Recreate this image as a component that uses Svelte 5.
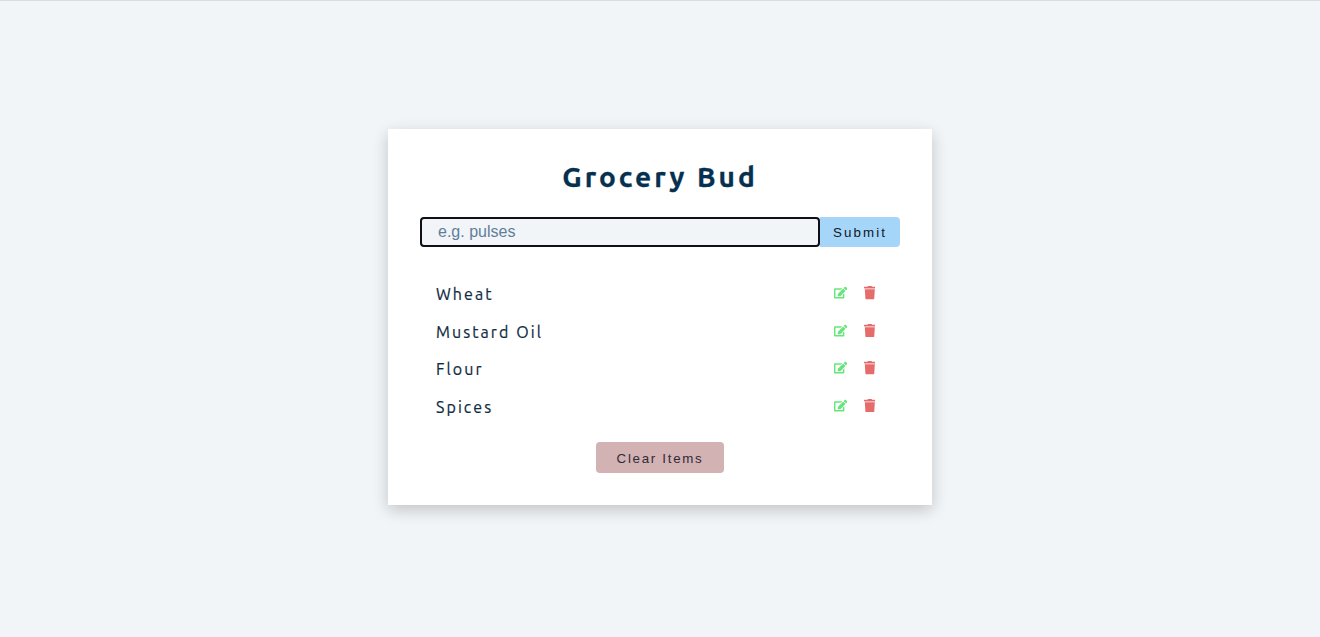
<script>
  const items = ['Wheat', 'Mustard Oil', 'Flour', 'Spices'];
</script>

<main>
  <section class="card">
    <h3>Grocery Bud</h3>
    <form onsubmit={(e) => e.preventDefault()}>
      <input type="text" placeholder="e.g. pulses" />
      <button class="submit" type="submit">Submit</button>
    </form>
    <div class="list">
      {#each items as item}
        <article>
          <p>{item}</p>
          <div class="actions">
            <button class="edit" type="button" aria-label="edit">
              <svg viewBox="0 0 576 512" fill="currentColor"><path d="M402.6 83.2l90.2 90.2c3.8 3.8 3.8 10 0 13.8L274.4 405.6l-92.8 10.3c-12.4 1.4-22.9-9.1-21.5-21.5l10.3-92.8L388.8 83.2c3.8-3.8 10-3.8 13.8 0zm162-22.9l-48.8-48.8c-15.2-15.2-39.9-15.2-55.2 0l-35.4 35.4c-3.8 3.8-3.8 10 0 13.8l90.2 90.2c3.8 3.8 10 3.8 13.8 0l35.4-35.4c15.2-15.3 15.2-40 0-55.2zM384 346.2V448H64V128h229.8c3.2 0 6.2-1.3 8.5-3.5l40-40c7.6-7.6 2.2-20.5-8.5-20.5H48C21.5 64 0 85.5 0 112v352c0 26.5 21.5 48 48 48h352c26.5 0 48-21.5 48-48V306.2c0-10.7-12.9-16-20.5-8.5l-40 40c-2.2 2.3-3.5 5.3-3.5 8.5z" /></svg>
            </button>
            <button class="delete" type="button" aria-label="delete">
              <svg viewBox="0 0 448 512" fill="currentColor"><path d="M432 32H312l-9.4-18.7A24 24 0 0 0 281.1 0H166.8a23.72 23.72 0 0 0-21.4 13.3L136 32H16A16 16 0 0 0 0 48v32a16 16 0 0 0 16 16h416a16 16 0 0 0 16-16V48a16 16 0 0 0-16-16zM53.2 467a48 48 0 0 0 47.9 45h245.8a48 48 0 0 0 47.9-45L416 128H32z" /></svg>
            </button>
          </div>
        </article>
      {/each}
    </div>
    <button class="clear" type="button">Clear Items</button>
  </section>
</main>

<style>
  :global(body) {
    background: #f1f5f8;
  }
  main {
    box-sizing: border-box;
    height: 637px;
    border-top: 1px solid #d9dee2;
    padding-top: 128px;
    font-family: Ubuntu, "Noto Sans", sans-serif;
  }
  .card {
    box-sizing: border-box;
    width: 544px;
    height: 376px;
    margin: 0 auto;
    padding: 32px;
    background: #fff;
    box-shadow: 0 5px 15px rgba(0, 0, 0, 0.2);
  }
  h3 {
    margin: 0 0 24px;
    height: 32px;
    line-height: 32px;
    font-size: 28px;
    font-weight: 700;
    letter-spacing: 3px;
    text-align: center;
    color: #05304f;
    -webkit-text-stroke: 0.3px #05304f;
  }
  form {
    display: flex;
    height: 30px;
  }
  input {
    box-sizing: border-box;
    width: 400px;
    height: 30px;
    padding: 0 16px 1px;
    border: 2px solid #0d1014;
    border-radius: 4px;
    outline: none;
    background: #f1f5f8;
    font: 16px "Liberation Sans", Arial, sans-serif;
  }
  input::placeholder {
    color: #617d98;
    opacity: 1;
  }
  button {
    border: 0;
    padding: 0;
    background: transparent;
    font-family: "Liberation Sans", Arial, sans-serif;
    font-size: 13.333px;
  }
  .submit {
    width: 80px;
    padding-top: 1px;
    border-radius: 0 4px 4px 0;
    background: #a5d5f9;
    letter-spacing: 2.1px;
    color: #10181f;
  }
  .list {
    margin-top: 32.3px;
  }
  article {
    display: flex;
    align-items: center;
    justify-content: space-between;
    height: 29.6px;
    margin-bottom: 8px;
    padding: 0 24.7px 0 16px;
  }
  p {
    margin: 0;
    font-size: 16px;
    line-height: 24px;
    letter-spacing: 2.08px;
    color: #102a42;
    -webkit-text-stroke: 0.2px #102a42;
  }
  .actions {
    display: flex;
    align-items: center;
    gap: 16.3px;
    padding-bottom: 2.5px;
  }
  .actions button {
    display: flex;
  }
  svg {
    width: 13.333px;
    height: 13.333px;
  }
  .delete svg {
    width: 11.667px;
  }
  .edit {
    color: #66e67a;
  }
  .delete {
    color: #e66b6b;
  }
  .clear {
    display: block;
    width: 128px;
    height: 31px;
    margin: 20.3px auto 0;
    padding-top: 2px;
    border-radius: 4px;
    background: #d2b2b2;
    letter-spacing: 1.7px;
    color: #302a38;
  }
</style>
